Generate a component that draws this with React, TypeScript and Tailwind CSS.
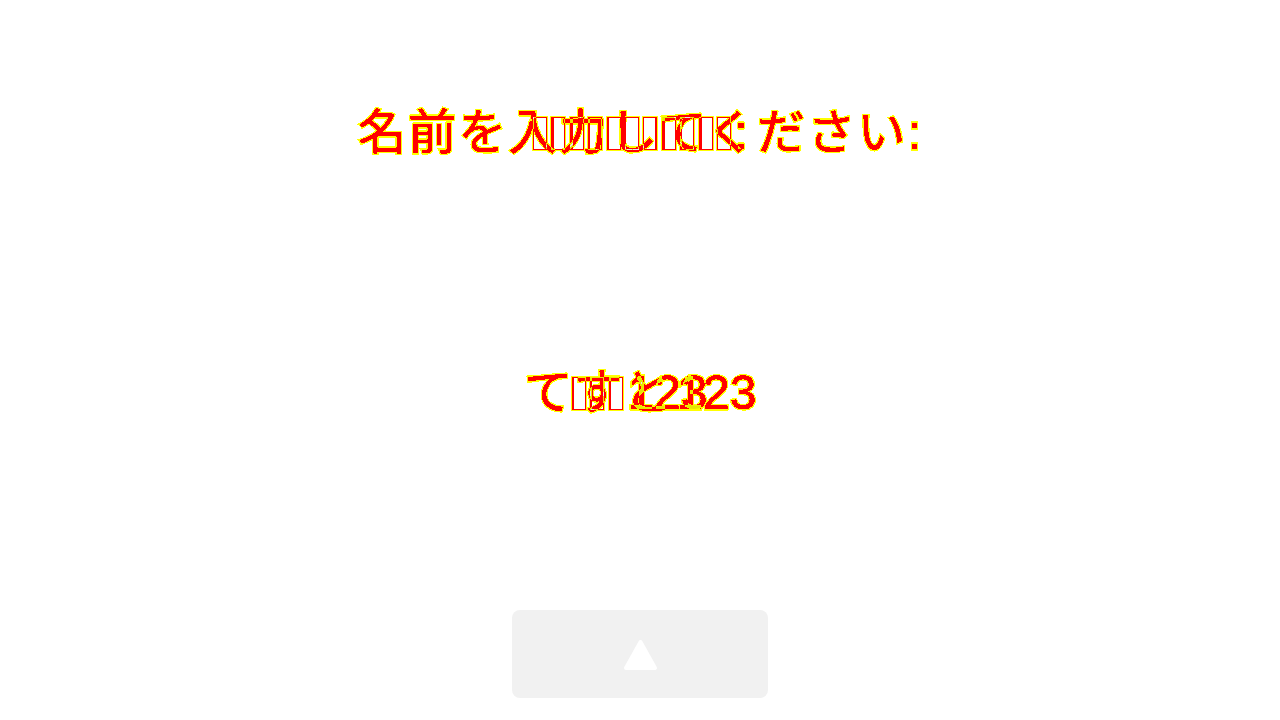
import React from "react";

const CJK = "font-['Liberation_Sans','Noto_Sans_CJK_JP',sans-serif]";

type Variant = "fill" | "edge" | "shade";

const textStyle: Record<Variant, string> = {
  fill: "text-[#00ffff] [-webkit-text-stroke:0.4px_#00ffff]",
  edge: "text-transparent [-webkit-text-stroke:3px_#ffff00]",
  shade: "bg-white text-[#e7e7e7]",
};

const boxStyle: Record<Variant, string> = {
  fill: "border-[#00ffff]",
  edge: "border-transparent outline-1 outline-[#ffff00]",
  shade: "border-[#e7e7e7]",
};

const blend: Record<Variant, string> = {
  fill: "mix-blend-difference",
  edge: "mix-blend-multiply",
  shade: "mix-blend-lighten",
};

const LINE1_BOXES = [
  "border-l", "border-l-[3px]", "border-l-[3px]", "border-l-2", "border-l-2", "border-l",
  "border-l border-r-2", "border-l-[3px]", "border-l-2", "border-l-[3px]", "border-l",
];
const LINE2_BOXES = ["border-l-2", "border-l-2", "border-l-2"];

function Boxes({ sides, variant }: { sides: string[]; variant: Variant }) {
  return (
    <span className="inline-flex">
      {sides.map((side, i) => (
        <span key={i} className="flex h-[33px] w-[18.4px]">
          <span className={`h-full w-[14px] shrink-0 border-t border-b ${side.includes("border-r") ? "" : "border-r"} ${side} ${boxStyle[variant]}`} />
        </span>
      ))}
    </span>
  );
}

function Layer({ line, variant }: { line: 1 | 2; variant: Variant }) {
  const base = `absolute inset-0 whitespace-pre leading-[60px] text-[48px] ${CJK} ${textStyle[variant]} ${blend[variant]}`;
  return line === 1 ? (
    <>
      <div className={`${base} pl-[8px] pt-[3px] tracking-[2.25px]`}>名前を入力してください:</div>
      <div className={`${base} flex items-start pl-[183px] pt-[3px]`}>
        <span className="flex h-[60px] pt-[14px]"><Boxes sides={LINE1_BOXES} variant={variant} /></span>
        <span className="-ml-px">:</span>
      </div>
    </>
  ) : (
    <>
      <div className={`${base} pl-[174px] pt-[3px]`}>
        <span className="tracking-[2px]">てすと</span>
        <span className="-ml-[11px]">{" 123"}</span>
      </div>
      <div className={`${base} flex items-start pl-[222px] pt-[3px]`}>
        <span className="flex h-[60px] w-[42px] pt-[14px]"><Boxes sides={LINE2_BOXES} variant={variant} /></span>
        <span>{" 123"}</span>
      </div>
    </>
  );
}

function Line({ line }: { line: 1 | 2 }) {
  return (
    <div className="relative isolate h-[70px] w-[580px]">
      <div className="absolute inset-0 isolate bg-white [filter:url(#crisp)]">
        <div className="absolute inset-0 isolate bg-white"><Layer line={line} variant="fill" /></div>
        <Layer line={line} variant="edge" />
      </div>
      <div className="absolute inset-0 isolate mix-blend-multiply">
        <Layer line={line} variant="shade" />
      </div>
    </div>
  );
}

export default function App() {
  return (
    <main className="flex h-[720px] w-[1280px] flex-col items-start overflow-hidden bg-white">
      <svg className="absolute size-0" aria-hidden="true">
        <filter id="crisp" x="0" y="0" width="1" height="1" colorInterpolationFilters="sRGB">
          <feComponentTransfer>
            <feFuncR type="discrete" tableValues="0 1" />
            <feFuncG type="discrete" tableValues="0 1" />
            <feFuncB type="discrete" tableValues="0 1" />
          </feComponentTransfer>
        </filter>
      </svg>
      <div className="ml-[350px] mt-[100px]"><Line line={1} /></div>
      <div className="ml-[350px] mt-[190px]"><Line line={2} /></div>
      <button className="ml-[512px] mt-[180px] flex h-[88px] w-[256px] items-center justify-center rounded-lg bg-[#f1f1f1]">
        <svg width="36" height="32" viewBox="0 0 36 32" className="mt-[2px]">
          <path d="M18.5 3L33 29H4Z" fill="white" stroke="white" strokeWidth="4" strokeLinejoin="round" />
        </svg>
      </button>
    </main>
  );
}
